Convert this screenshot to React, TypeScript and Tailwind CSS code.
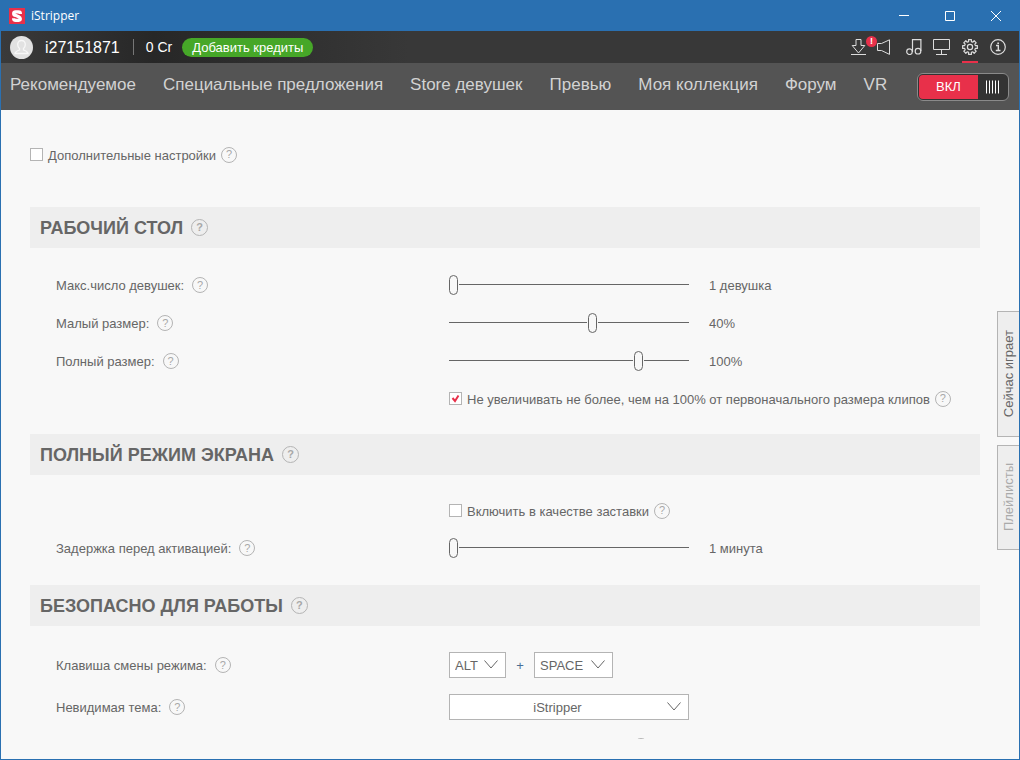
import type { ReactNode } from 'react'

const navItems = [
  'Рекомендуемое',
  'Специальные предложения',
  'Store девушек',
  'Превью',
  'Моя коллекция',
  'Форум',
  'VR',
]

// Outline of an eight-toothed cog centered in a 16px box
const gearPoints = Array.from({ length: 8 }, (_, i) => {
  const step = Math.PI / 4
  return [
    [-0.62, 5.6],
    [-0.5, 7.5],
    [0.5, 7.5],
    [0.62, 5.6],
  ].map(([k, r]) => {
    const a = i * step + (k * step) / 2
    return `${(8 + r * Math.sin(a)).toFixed(2)},${(8 - r * Math.cos(a)).toFixed(2)}`
  }).join(' ')
}).join(' ')

function Help({ large = false }: { large?: boolean }) {
  return (
    <button
      type="button"
      aria-label="Справка"
      className={`grid shrink-0 place-items-center rounded-full border border-[#b4b4b4] text-[11px] leading-none text-[#a8a8a8] ${large ? 'size-[17px] font-bold' : 'size-4'}`}
    >
      ?
    </button>
  )
}

function Check({ label, checked = false }: { label: string; checked?: boolean }) {
  return (
    <div className="flex h-[23px] items-center gap-[5px]">
      <label className="flex items-center gap-[5px]">
        <span className="mb-px grid">
          <input type="checkbox" defaultChecked={checked} className="peer size-[13px] appearance-none border border-[#b4b4b4] bg-white [grid-area:1/1]" />
          <svg viewBox="0 0 13 13" className="pointer-events-none invisible size-[13px] [grid-area:1/1] peer-checked:visible" fill="none" stroke="#e8304a" strokeWidth="2">
            <path d="M3.5 6 6 9 9.5 3.5" />
          </svg>
        </span>
        <span className="pt-0.5">{label}</span>
      </label>
      <Help />
    </div>
  )
}

function Section({ title, children }: { title: string; children: ReactNode }) {
  return (
    <section>
      <div className="flex h-[41px] items-center gap-2 bg-[#eeeeee] px-2.5">
        <h2 className="pt-px text-lg font-bold">{title}</h2>
        <Help large />
      </div>
      {children}
    </section>
  )
}

function Row({ label, children }: { label?: string; children: ReactNode }) {
  return (
    <div className="flex items-center">
      <div className="flex w-[419px] shrink-0 items-center gap-2 pl-[26px]">
        {label && (
          <>
            <span className="pt-px">{label}</span>
            <Help />
          </>
        )}
      </div>
      {children}
    </div>
  )
}

function SliderRow({ label, position, value }: { label: string; position: number; value: string }) {
  return (
    <Row label={label}>
      <input
        type="range"
        aria-label={label}
        defaultValue={position}
        className="h-6 w-60 appearance-none bg-transparent pb-px [&::-webkit-slider-runnable-track]:h-px [&::-webkit-slider-runnable-track]:bg-[#666666] [&::-webkit-slider-thumb]:-mt-[9px] [&::-webkit-slider-thumb]:h-5 [&::-webkit-slider-thumb]:w-[9px] [&::-webkit-slider-thumb]:appearance-none [&::-webkit-slider-thumb]:rounded-full [&::-webkit-slider-thumb]:border [&::-webkit-slider-thumb]:border-[#666666] [&::-webkit-slider-thumb]:bg-[#f8f8f8] [&::-webkit-slider-thumb]:shadow-[0_0_0_1px_#f8f8f8]"
      />
      <span className="ml-5 pt-px">{value}</span>
    </Row>
  )
}

function Dropdown({ label, value, className, selectClass = '' }: { label: string; value: string; className: string; selectClass?: string }) {
  return (
    <div className={`grid items-center ${className}`}>
      <select aria-label={label} className={`h-[26px] w-full appearance-none border border-[#b4b4b4] bg-white pt-px pl-[5px] [grid-area:1/1] ${selectClass}`}>
        <option>{value}</option>
      </select>
      <svg viewBox="0 0 14 9" className="pointer-events-none mr-2 mb-0.5 h-[9px] w-3.5 justify-self-end [grid-area:1/1]" fill="none" stroke="#666666">
        <path d="M.5.5 7 8 13.5.5" />
      </svg>
    </div>
  )
}

function TitleBar() {
  return (
    <div className="flex h-[31px] items-center bg-[#2a70b1] pr-px pl-[9px] text-white">
      <svg viewBox="0 0 16 16" className="size-4">
        <rect width="16" height="16" fill="#e8304a" />
        <path d="M11.300 6V5.200Q11.300 3.800 9.500 3.800H6.500Q4.700 3.800 4.700 5.500T6.500 7.300L9.700 8.700Q11.300 9.400 11.300 10.700T9.500 12.300H6.500Q4.700 12.300 4.700 11V10.300" fill="none" stroke="#fff" strokeWidth="3.300" />
      </svg>
      <span className="ml-1.5 font-['Open_Sans',sans-serif] text-xs">iStripper</span>
      <div className="ml-auto flex">
        <button type="button" aria-label="Свернуть" className="grid h-[31px] w-[46px] place-items-center">
          <svg viewBox="0 0 10 10" className="size-2.5" stroke="#fff"><path d="M0 4.5h10" /></svg>
        </button>
        <button type="button" aria-label="Развернуть" className="grid h-[31px] w-[46px] place-items-center">
          <svg viewBox="0 0 10 10" className="size-2.5" fill="none" stroke="#fff"><path d="M.5.5h9v9h-9z" /></svg>
        </button>
        <button type="button" aria-label="Закрыть" className="grid h-[31px] w-[46px] place-items-center">
          <svg viewBox="0 0 10 10" className="size-2.5" stroke="#fff"><path d="m0 0 10 10M10 0 0 10" /></svg>
        </button>
      </div>
    </div>
  )
}

function UserBar() {
  return (
    <div className="flex h-8 items-center bg-linear-to-r from-[#3a3a3a] via-[#272727] via-15% to-[#383838] to-40% pr-[13px] pl-[9px] text-white">
      <svg viewBox="0 0 23 23" className="size-[23px]">
        <circle cx="11.5" cy="11.5" r="11.5" fill="#e2e2e2" />
        <path d="M11.500 4.500c-2.500 0-3.800 1.700-3.800 4 0 1.800.8 3.200 1.800 4v1.500c-2 .6-4 1.200-4.500 3.500h13c-.5-2.300-2.500-2.900-4.500-3.500v-1.500c1-.8 1.800-2.200 1.800-4 0-2.300-1.300-4-3.800-4Z" fill="none" stroke="#f8f8f8" strokeWidth="1.300" />
      </svg>
      <span className="ml-3 pt-px text-base">i27151871</span>
      <span className="ml-[13px] h-4 w-px bg-[#777777]" />
      <span className="ml-3 text-sm">0 Cr</span>
      <button type="button" className="ml-2.5 h-[19px] rounded-full bg-[#46a728] px-2.5 text-[13px] leading-[19px]">Добавить кредиты</button>

      <div className="ml-auto flex h-8 items-center text-[#dddddd]">
        <button type="button" aria-label="Загрузки" className="relative">
          <svg viewBox="0 0 15 16" className="h-4 w-[15px]" fill="none" stroke="currentColor">
            <path d="M5 .5h5v6h3.800L7.500 14 1.200 6.500H5zM0 15.500h15" />
          </svg>
          <span className="absolute -top-[3px] left-[15px] grid size-[11px] place-items-center rounded-full bg-[#e8304a] text-[9px] leading-none font-bold text-white">!</span>
        </button>
        <button type="button" aria-label="Звук" className="ml-[11px]">
          <svg viewBox="0 0 14 16" className="h-4 w-3.5" fill="none" stroke="currentColor">
            <path d="M.5 4.500h4L12.500.800v14.600L4.500 11.500h-4z" />
          </svg>
        </button>
        <button type="button" aria-label="Музыка" className="ml-[15px]">
          <svg viewBox="0 0 16 16" className="size-4" fill="none" stroke="currentColor" strokeWidth="1.200">
            <path d="M6.500 13V.700h8.400V12" />
            <circle cx="3.500" cy="12.700" r="2.800" />
            <circle cx="12" cy="12.200" r="2.800" />
          </svg>
        </button>
        <button type="button" aria-label="Экран" className="ml-[11px]">
          <svg viewBox="0 0 17 16" className="h-4 w-[17px]" fill="none" stroke="currentColor">
            <path d="M.5.5h16v10H.5zM8.500 10.500v5M3 15.500h11" />
          </svg>
        </button>
        <button type="button" aria-label="Настройки" className="ml-3 flex h-8 items-center border-t-2 border-b-2 border-t-transparent border-b-[#e8304a]">
          <svg viewBox="0 0 16 16" className="size-4" fill="none" stroke="currentColor" strokeWidth="1.200" strokeLinejoin="round">
            <polygon points={gearPoints} />
            <circle cx="8" cy="8" r="2.600" />
          </svg>
        </button>
        <button type="button" aria-label="Информация" className="ml-3">
          <svg viewBox="0 0 16 16" className="size-4" fill="none" stroke="currentColor" strokeWidth="1.200">
            <circle cx="8" cy="8" r="7.300" />
            <path d="M6 6.500h2.300v5M5.800 11.500h4.700M7.300 4.200h1.700" strokeWidth="1.400" />
          </svg>
        </button>
      </div>
    </div>
  )
}

function NavBar() {
  return (
    <div className="flex h-[47px] items-center bg-[#545454] pr-2.5 pl-[9px]">
      <nav className="mb-1 flex gap-[27px] text-[17px] whitespace-nowrap text-[#d2d2d2]">
        {navItems.map((item) => (
          <a key={item} href="#">{item}</a>
        ))}
      </nav>
      <button type="button" role="switch" aria-checked="true" className="ml-auto flex h-7 w-[92px] rounded-md border border-[#8a8a8a] bg-[#333333] p-px text-[13px] text-white">
        <span className="grid h-6 w-[59px] place-items-center rounded-l-[4px] bg-[#e8304a]">ВКЛ</span>
        <svg viewBox="0 0 29 24" className="h-6 w-[29px]" stroke="#fff">
          <path d="M8.500 5.500v13M11.500 5.500v13M14.500 5.500v13M17.500 5.500v13M20.500 5.500v13" />
        </svg>
      </button>
    </div>
  )
}

export default function App() {
  return (
    <div className="flex h-screen flex-col bg-[#f8f8f8] font-['Liberation_Sans',Arial,sans-serif] text-[13px] text-[#666666]">
      <TitleBar />
      <div className="flex min-h-0 flex-1 flex-col border-x border-b border-[#2a70b1]">
        <UserBar />
        <NavBar />
        <div className="flex min-h-0 flex-1 gap-[17px]">
          <main className="mb-5 min-w-0 flex-1 overflow-hidden pt-[33px] pl-[29px]">
            <Check label="Дополнительные настройки" />

            <div className="mt-[41px]">
              <Section title="РАБОЧИЙ СТОЛ">
                <div className="flex flex-col gap-3.5 pt-[25px] pb-6">
                  <SliderRow label="Макс.число девушек:" position={0} value="1 девушка" />
                  <SliderRow label="Малый размер:" position={60} value="40%" />
                  <SliderRow label="Полный размер:" position={80} value="100%" />
                  <Row>
                    <Check label="Не увеличивать не более, чем на 100% от первоначального размера клипов" checked />
                  </Row>
                </div>
              </Section>

              <Section title="ПОЛНЫЙ РЕЖИМ ЭКРАНА">
                <div className="flex flex-col gap-3.5 pt-6 pb-[25px]">
                  <Row>
                    <Check label="Включить в качестве заставки" />
                  </Row>
                  <SliderRow label="Задержка перед активацией:" position={0} value="1 минута" />
                </div>
              </Section>

              <Section title="БЕЗОПАСНО ДЛЯ РАБОТЫ">
                <div className="flex flex-col gap-4 pt-[26px]">
                  <Row label="Клавиша смены режима:">
                    <Dropdown label="Клавиша-модификатор" value="ALT" className="w-[57px]" />
                    <span className="w-7 pt-px text-center text-[#4a6f96]">+</span>
                    <Dropdown label="Клавиша" value="SPACE" className="w-[79px]" />
                  </Row>
                  <Row label="Невидимая тема:">
                    <Dropdown label="Тема" value="iStripper" className="w-60" selectClass="pr-7 [text-align-last:center]" />
                  </Row>
                  <div className="mt-0.5 ml-[603px] size-4 shrink-0 rounded-full border border-[#b4b4b4]" />
                </div>
              </Section>
            </div>
          </main>

          <aside className="flex w-[22px] shrink-0 flex-col gap-2 pt-[201px]">
            <button type="button" className="grid h-[126px] place-items-center border border-r-0 border-[#b4b4b4] bg-[#eeeeee]">
              <span className="rotate-180 whitespace-nowrap [writing-mode:vertical-rl]">Сейчас играет</span>
            </button>
            <button type="button" className="grid h-[105px] place-items-center border border-r-0 border-[#b4b4b4] bg-[#eeeeee] text-[#aaaaaa]">
              <span className="rotate-180 whitespace-nowrap [writing-mode:vertical-rl]">Плейлисты</span>
            </button>
          </aside>
        </div>
      </div>
    </div>
  )
}
